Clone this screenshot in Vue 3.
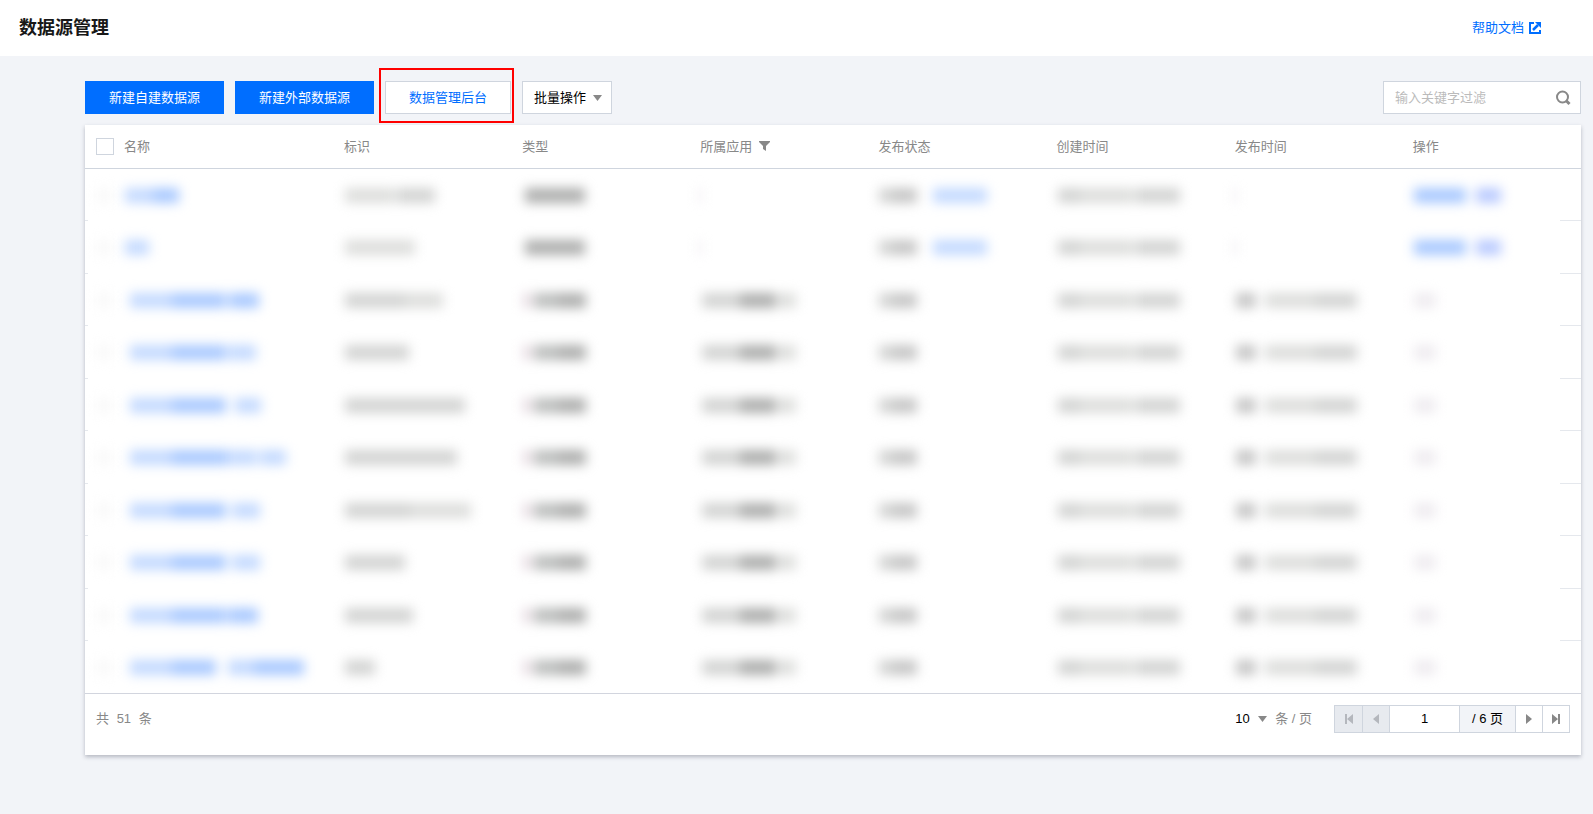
<script setup>
import { ref } from 'vue'

const keyword = ref('')
const page = ref('1')
const pageSize = ref('10')
const allChecked = ref(false)

const columns = ['标识', '类型', '所属应用', '发布状态', '创建时间', '发布时间', '操作']

// Masked cell contents: each bar is [gap before, width, tone]
const typeA = [[5, 26, 'dark'], [0, 34, 'dark']]
const typeB = [[3, 8, 'rose'], [3, 24, 'deep'], [0, 28, 'dark']]
const app = [[4, 38, 'soft'], [0, 36, 'dark'], [2, 18, 'pale']]
const state = [[3, 14, 'soft'], [0, 24, 'mid']]
const stateLink = [[3, 14, 'soft'], [0, 24, 'mid'], [16, 54, 'sky']]
const created = [[3, 22, 'soft'], [0, 54, 'pale'], [2, 44, 'soft']]
const published = [[3, 20, 'mid'], [9, 50, 'pale'], [0, 42, 'soft']]
const actions = [[3, 52, 'blue'], [10, 25, 'violet']]
const none = [[3, 22, 'faint']]
const dash = [[0, 4, 'faint']]
const tail = [typeB, app, state, created, published, none]

const rows = [
  [[[3, 28, 'sky'], [0, 26, 'blue']], [[3, 50, 'pale'], [2, 38, 'soft']], typeA, dash, stateLink, created, dash, actions],
  [[[3, 24, 'sky']], [[3, 28, 'pale'], [0, 42, 'pale']], typeA, dash, stateLink, created, dash, actions],
  [[[8, 42, 'sky'], [0, 54, 'blue'], [3, 30, 'blue']], [[3, 60, 'soft'], [0, 38, 'pale']], ...tail],
  [[[8, 42, 'sky'], [0, 54, 'blue'], [2, 28, 'sky']], [[3, 64, 'soft']], ...tail],
  [[[8, 42, 'sky'], [0, 54, 'blue'], [9, 26, 'sky']], [[3, 66, 'soft'], [0, 54, 'soft']], ...tail],
  [[[8, 42, 'sky'], [0, 56, 'blue'], [1, 28, 'sky'], [3, 26, 'sky']], [[3, 112, 'soft']], ...tail],
  [[[8, 42, 'sky'], [0, 54, 'blue'], [6, 28, 'sky']], [[3, 66, 'soft'], [0, 60, 'pale']], ...tail],
  [[[8, 42, 'sky'], [0, 54, 'blue'], [6, 28, 'sky']], [[3, 60, 'soft']], ...tail],
  [[[8, 42, 'sky'], [0, 54, 'blue'], [2, 30, 'blue']], [[3, 68, 'soft']], ...tail],
  [[[8, 42, 'sky'], [0, 44, 'blue'], [12, 26, 'sky'], [0, 50, 'blue']], [[3, 30, 'soft']], ...tail],
]
</script>

<template>
  <div class="page">
    <header class="topbar">
      <h1>数据源管理</h1>
      <a class="help" href="#">
        帮助文档
        <svg width="12" height="12" viewBox="0 0 12 12" fill="none" stroke="currentColor" stroke-width="2">
          <path d="M5 1H1v10h10V8" />
          <path d="M4 8l5-5" stroke-width="2.500" />
          <path d="M6 0h6v6z" fill="currentColor" stroke="none" />
        </svg>
      </a>
    </header>

    <main>
      <div class="toolbar">
        <button class="btn primary" type="button">新建自建数据源</button>
        <button class="btn primary" type="button">新建外部数据源</button>
        <span class="marked"><button class="btn plain" type="button">数据管理后台</button></span>
        <button class="btn batch" type="button">
          批量操作
          <svg width="9" height="6" viewBox="0 0 9 6"><path d="M0 0h9L4.500 6z" fill="#888" /></svg>
        </button>
        <label class="search">
          <input v-model="keyword" type="text" placeholder="输入关键字过滤" aria-label="输入关键字过滤">
          <svg width="16" height="16" viewBox="0 0 16 16" fill="none" stroke="#888" stroke-width="2">
            <circle cx="7.500" cy="7" r="5.500" />
            <path d="M11 10.500l3.500 3.500" stroke-width="3" />
          </svg>
        </label>
      </div>

      <section class="card">
        <table>
          <colgroup>
            <col class="col-check">
            <col class="col-name">
            <col v-for="c in columns" :key="c">
          </colgroup>
          <thead>
            <tr>
              <th class="check"><input v-model="allChecked" type="checkbox" aria-label="全选"></th>
              <th>名称</th>
              <th v-for="c in columns" :key="c">
                {{ c }}<svg v-if="c === '所属应用'" class="filter" width="11" height="10" viewBox="0 0 11 10"><path d="M0 0h11v1L7 5v5L4 8V5L0 1z" fill="#888" /></svg>
              </th>
            </tr>
          </thead>
          <tbody>
            <tr v-for="(row, i) in rows" :key="i">
              <td class="check"><span class="mask" aria-hidden="true"><i class="box"></i></span></td>
              <td v-for="(cell, j) in row" :key="j">
                <span class="mask" aria-hidden="true">
                  <i v-for="(bar, k) in cell" :key="k" :class="bar[2]" :style="{ marginLeft: bar[0] + 'px', width: bar[1] + 'px' }"></i>
                </span>
              </td>
            </tr>
          </tbody>
        </table>

        <footer class="pager">
          <p class="total">共 <span>51</span> 条</p>
          <label class="size">
            <select v-model="pageSize" aria-label="每页条数">
              <option>10</option>
              <option>20</option>
              <option>50</option>
            </select>
            <svg width="9" height="6" viewBox="0 0 9 6"><path d="M0 0h9L4.500 6z" fill="#888" /></svg>
            <span>条 / 页</span>
          </label>
          <div class="nav">
            <button type="button" disabled aria-label="首页">
              <svg width="8" height="10" viewBox="0 0 8 10" fill="#b4b7bd"><path d="M0 0h2v10H0zM8 0v10L2 5z" /></svg>
            </button>
            <button type="button" disabled aria-label="上一页">
              <svg width="6" height="10" viewBox="0 0 6 10" fill="#b4b7bd"><path d="M6 0v10L0 5z" /></svg>
            </button>
            <input v-model="page" type="text" aria-label="页码">
            <span class="count">/ 6 页</span>
            <button type="button" aria-label="下一页">
              <svg width="6" height="10" viewBox="0 0 6 10" fill="#888"><path d="M0 0v10l6-5z" /></svg>
            </button>
            <button type="button" aria-label="末页">
              <svg width="8" height="10" viewBox="0 0 8 10" fill="#888"><path d="M6 0h2v10H6zM0 0v10l6-5z" /></svg>
            </button>
          </div>
        </footer>
      </section>
    </main>
  </div>
</template>

<style>
body {
  margin: 0;
  background: #f2f4f8;
}
</style>

<style scoped>
.page {
  font: 13px/20px "Liberation Sans", "Noto Sans CJK SC", sans-serif;
  color: #000;
}
.page * {
  box-sizing: border-box;
}
button,
input,
select {
  margin: 0;
  font: inherit;
  border-radius: 0;
}
.topbar {
  display: flex;
  align-items: center;
  justify-content: space-between;
  height: 56px;
  padding: 0 52px 0 19px;
  background: #fff;
}
h1 {
  margin: 0;
  font-size: 18px;
  line-height: 24px;
  font-weight: 700;
  color: #181818;
}
.help {
  display: flex;
  align-items: center;
  gap: 5px;
  color: #006eff;
  text-decoration: none;
}
main {
  padding: 25px 12px 59px 85px;
}
.toolbar {
  display: flex;
  gap: 11px;
  margin-bottom: 11px;
}
.btn {
  height: 33px;
  padding: 0 23px;
  border: 1px solid #cfd5de;
  background: #fff;
  white-space: nowrap;
}
.primary {
  border-color: #006eff;
  background: #006eff;
  color: #fff;
}
.plain {
  color: #006eff;
}
.marked {
  position: relative;
}
.marked::after {
  content: "";
  position: absolute;
  inset: -13px -3px -9px -6px;
  border: 2px solid #f00;
  pointer-events: none;
}
.batch {
  display: flex;
  align-items: center;
  gap: 7px;
  padding: 0 9px 0 11px;
}
.search {
  display: flex;
  align-items: center;
  width: 198px;
  height: 33px;
  margin-left: auto;
  padding: 0 9px 0 11px;
  border: 1px solid #cfd5de;
  background: #fff;
}
.search input {
  flex: 1;
  min-width: 0;
  padding: 0;
  border: 0;
  outline: 0;
  background: none;
}
.search input::placeholder {
  color: #bbb;
  opacity: 1;
}
.card {
  background: #fff;
  box-shadow: 0 2px 4px rgba(54, 58, 80, 0.32);
}
table {
  width: 100%;
  table-layout: fixed;
  border-spacing: 0;
}
.col-check {
  width: 29px;
}
.col-name {
  width: 220px;
}
th {
  height: 44px;
  padding: 0 10px;
  border-bottom: 1px solid #cfd5de;
  text-align: left;
  font-weight: 400;
  color: #888;
}
.check {
  padding: 0 0 0 11px;
}
.check input {
  display: block;
  width: 18px;
  height: 17px;
  appearance: none;
  border: 1px solid #cfd5de;
  background: #fff;
}
.check input:checked {
  background: #006eff;
}
.filter {
  margin-left: 7px;
}
td {
  height: 52px;
  padding: 0 8px;
}
tr:nth-child(even) td {
  height: 53px;
}
tbody tr:not(:last-child) td:first-child {
  background: linear-gradient(#e5e8ed, #e5e8ed) left bottom / 3px 1px no-repeat;
}
tbody tr:not(:last-child) td:last-child {
  background: linear-gradient(#e5e8ed, #e5e8ed) right bottom / 21px 1px no-repeat;
}
tbody tr:last-child td {
  border-bottom: 1px solid #d2d5de;
}
.mask {
  display: flex;
  filter: blur(6px);
}
.mask i {
  flex: none;
  height: 15px;
}
.blue { background: #a9c9ff; }
.sky { background: #c4daff; }
.violet { background: #b9caff; }
.dark { background: #aeafae; }
.deep { background: #bcbebd; }
.mid { background: #c6c6c6; }
.soft { background: #d3d4d3; }
.pale { background: #dddedc; }
.rose { background: #e6d9e1; }
.faint { background: #efecf0; }
.mask .box {
  width: 16px;
  background: #f9f9f9;
}
.pager {
  display: flex;
  align-items: center;
  padding: 11px 11px 22px;
  color: #888;
}
.total {
  margin: 0 auto 0 0;
}
.total span {
  margin: 0 4px;
}
.size {
  display: flex;
  align-items: center;
  gap: 8px;
  margin-right: 22px;
}
.size select {
  padding: 0;
  border: 0;
  appearance: none;
  background: none;
  color: #000;
}
.nav {
  display: flex;
  height: 28px;
  border: 1px solid #cfd5de;
}
.nav > * {
  display: flex;
  align-items: center;
  justify-content: center;
  width: 27px;
  padding: 0;
  border: 0;
  background: #fff;
}
.nav > * + * {
  border-left: 1px solid #cfd5de;
}
.nav button:disabled {
  background: #e7eaef;
}
.nav input {
  width: 70px;
  text-align: center;
  color: #000;
}
.nav .count {
  width: 56px;
  background: #f2f4f8;
  color: #000;
}
</style>
